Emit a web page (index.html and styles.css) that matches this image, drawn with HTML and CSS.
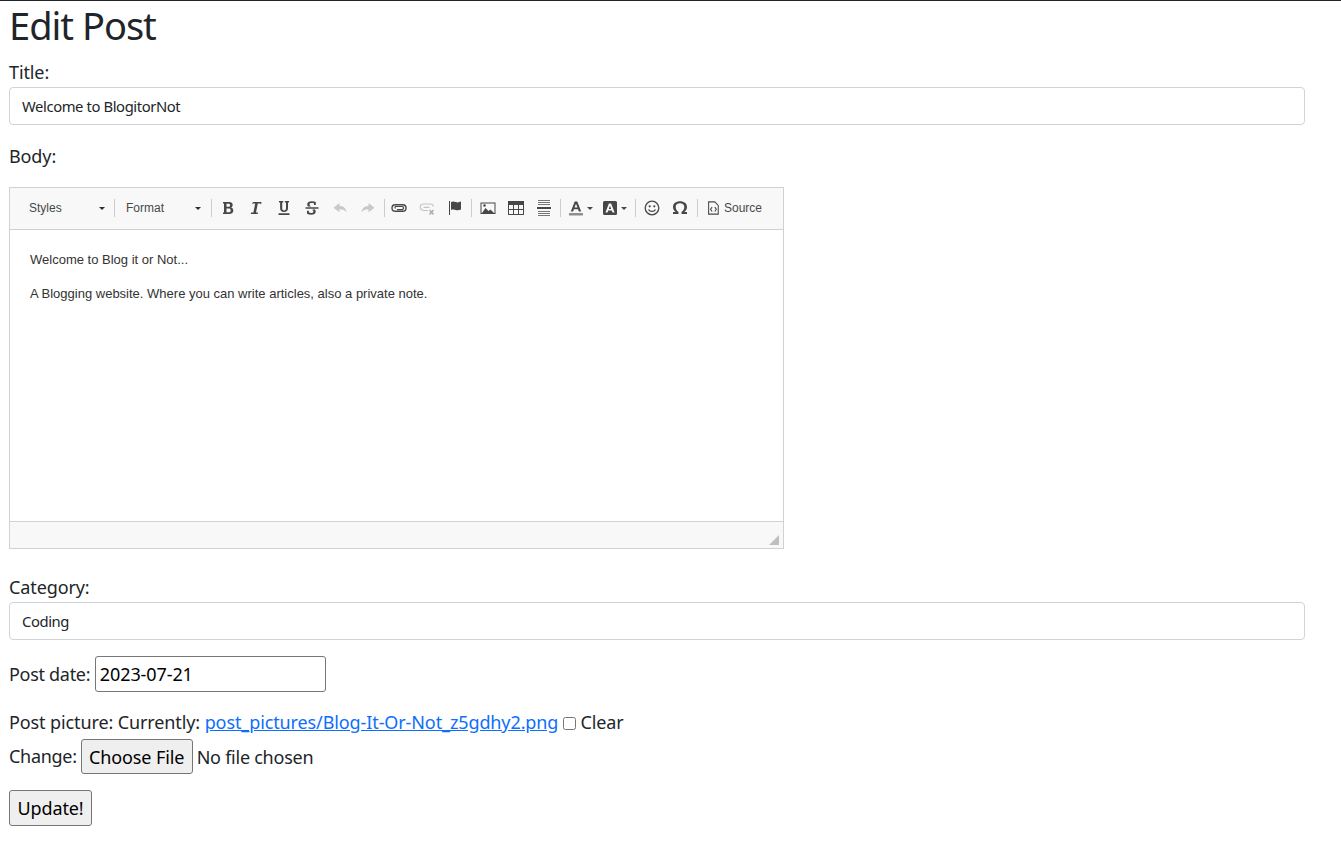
FILE: index.html
```html
<!DOCTYPE html>
<html lang="en">
<head>
<meta charset="utf-8">
<title>Edit Post</title>
<link rel="stylesheet" href="styles.css">
</head>
<body>
<main class="page">
  <h1 class="heading">Edit Post</h1>
  <form class="post-form">
    <p class="field">
      <label class="label">Title:</label>
      <input class="text-input" type="text" value="Welcome to BlogitorNot">
    </p>
    <p class="label body-label">Body:</p>
    <div class="editor">
      <div class="toolbar">
        <div class="combo combo-styles"><span>Styles</span><i class="caret"></i></div>
        <i class="sep"></i>
        <div class="combo combo-format"><span>Format</span><i class="caret"></i></div>
        <i class="sep sep-a"></i>
        <span class="btn"><svg viewBox="0 0 16 16" class="ico"><path fill="#474747" fill-rule="evenodd" d="M3 2h6.200c2.300 0 3.500 1.100 3.500 2.900 0 1.200-.6 2.100-1.700 2.600 1.500.4 2.300 1.500 2.300 3 0 2.200-1.500 3.500-4 3.500H3v-1.600h1V3.600H3zm3.500 1.800v3h1.900c1.100 0 1.700-.5 1.700-1.500s-.6-1.500-1.700-1.500zm0 4.800v3.600h2.200c1.300 0 2-.6 2-1.800s-.7-1.800-2-1.800z"/></svg></span>
        <span class="btn"><svg viewBox="0 0 16 16" class="ico"><path fill="#474747" d="M5 2h8.500l-.4 2.200-1.100-.7H9.800L8 12.500h2l-.3 1.500H2.800l.3-1.500h2.300L7.200 3.500H5.300l-1.300.7z"/></svg></span>
        <span class="btn"><svg viewBox="0 0 16 16" class="ico"><path fill="#474747" d="M3 1h4.300v1.400H6.200v5.900c0 1.400.6 2.100 1.900 2.100s1.900-.7 1.900-2.100V2.400H8.900V1H13v1.400h-1v5.900c0 2.400-1.400 3.600-4 3.600S4.100 10.700 4.100 8.300V2.400H3zM2.500 13.200h11V15h-11z"/></svg></span>
        <span class="btn"><svg viewBox="0 0 16 16" class="ico"><path fill="#474747" d="M1.500 7.200h13v1.600h-13zM4 6.400c-.6-.6-.8-1.300-.8-2 0-1.900 1.900-3.100 4.600-3.100 1.400 0 2.800.3 4 .8v2.800H10V3.500c-.6-.3-1.300-.4-2.100-.4-1.500 0-2.400.5-2.400 1.300 0 .8.500 1.400 1.700 2zM10.700 9.300c.7.600 1 1.300 1 2.100 0 2.200-1.900 3.300-4.400 3.300-1.500 0-3-.3-4.300-1v-2.900h1.900v1.800c.8.300 1.600.4 2.500.4 1.300 0 2-.6 2-1.500 0-.8-.5-1.300-1.200-1.800z"/></svg></span>
        <span class="btn"><svg viewBox="0 0 16 16" class="ico"><path fill="#c9c9c9" d="M7.500 3v3c3.800 0 6.500 2 7 6.500C13 10 11 9.300 7.500 9.300v3L1.500 7.700z"/></svg></span>
        <span class="btn"><svg viewBox="0 0 16 16" class="ico"><path fill="#c9c9c9" d="M8.500 3v3c-3.800 0-6.500 2-7 6.500C3 10 5 9.300 8.500 9.300v3l6-4.600z"/></svg></span>
        <i class="sep sep-b"></i>
        <span class="btn"><svg viewBox="0 0 16 16" class="ico"><path fill="none" stroke="#474747" stroke-width="1.400" d="M7 4.700H4.300a3.300 3.300 0 0 0 0 6.600h7.400a3.300 3.300 0 0 0 0-6.600H6.500"/><path fill="none" stroke="#474747" stroke-width="1.200" d="M4.500 8.400a1.200 1.200 0 0 1 0-1.900h7a1.700 1.700 0 0 1 0 3.100H6"/></svg></span>
        <span class="btn"><svg viewBox="0 0 16 16" class="ico"><path fill="none" stroke="#c4c4c4" stroke-width="1.200" d="M9 10.500H4.500a3 3 0 0 1 0-6.500h7a3 3 0 0 1 3 2.500M4.500 7.300h6"/><path stroke="#a8a8a8" stroke-width="1.400" fill="none" d="M10.500 10l4 4.500m0-4.500l-4 4.500"/></svg></span>
        <span class="btn"><svg viewBox="0 0 16 16" class="ico"><path fill="#474747" d="M2 1h1v14H2zM4 2c1.500-.7 3.200-.7 4.800 0s3.200.4 5.200-.4v8c-2 .8-3.600 1-5.200.4S5.500 9.300 4 10z"/></svg></span>
        <i class="sep sep-c"></i>
        <span class="btn"><svg viewBox="0 0 16 16" class="ico"><path fill="#474747" fill-rule="evenodd" d="M.5 2.500h15v11.500H.5zm1 1v9.500h13V3.500z"/><path fill="#474747" d="M2 13l3.500-5 3 3 2-1.500 3.500 3.500zM4.500 6.800a1.300 1.300 0 1 0 0-2.600 1.300 1.300 0 0 0 0 2.600z"/></svg></span>
        <span class="btn"><svg viewBox="0 0 16 16" class="ico"><path fill="#474747" fill-rule="evenodd" d="M0 1h16v14H0zM1 5v4h4V5zm5 0v4h4V5zm5 0v4h4V5zM1 10v4h4v-4zm5 0v4h4v-4zm5 0v4h4v-4z"/></svg></span>
        <span class="btn"><svg viewBox="0 0 16 16" class="ico"><path fill="#777" d="M2 0h12v1H2zM2 2h12v1H2zM2 4h12v1H2zM2 11h12v1H2zM2 13h12v1H2zM2 15h12v1H2z"/><path fill="#474747" d="M1 7h14v2H1z"/></svg></span>
        <i class="sep sep-d"></i>
        <span class="btn btn-wide"><svg viewBox="0 0 16 16" class="ico"><path fill="#474747" fill-rule="evenodd" d="M6.700 1.500h2.600l3.900 10h-2.300l-.8-2.300H5.900l-.8 2.300H2.800zm1.300 2.300L6.500 7.600h3z"/><path fill="#8f8f8f" d="M1 13h14v2.500H1z"/></svg><i class="caret caret-small"></i></span>
        <span class="btn btn-wide"><svg viewBox="0 0 16 16" class="ico"><path fill="#474747" fill-rule="evenodd" d="M2.500 1h11A1.500 1.500 0 0 1 15 2.500v11a1.500 1.500 0 0 1-1.500 1.500h-11A1.500 1.500 0 0 1 1 13.500v-11A1.500 1.500 0 0 1 2.500 1zM6.900 3.500 3.400 12.500h2.100l.7-2h3.600l.7 2h2.100L9.100 3.500zM8 5.700l1.200 3.200H6.800z"/></svg><i class="caret caret-small"></i></span>
        <i class="sep sep-e"></i>
        <span class="btn"><svg viewBox="0 0 16 16" class="ico"><circle cx="8" cy="8" r="6.800" fill="none" stroke="#474747" stroke-width="1.300"/><circle cx="5.700" cy="6.300" r="1.100" fill="#474747"/><circle cx="10.300" cy="6.300" r="1.100" fill="#474747"/><path fill="none" stroke="#474747" stroke-width="1.300" d="M4.500 9.500c1.500 2.600 5.500 2.600 7 0"/></svg></span>
        <span class="btn"><svg viewBox="0 0 16 16" class="ico"><path fill="#474747" d="M1 14v-2h2.700C2 10.700 1 9 1 6.900 1 3.500 4 1.300 8 1.300s7 2.200 7 5.600c0 2.100-1 3.800-2.700 5.100H15v2H9.500v-2c1.600-1 2.800-2.800 2.800-5 0-2.300-1.600-3.700-4.300-3.700S3.700 4.600 3.700 6.900c0 2.200 1.200 4 2.800 5v2z"/></svg></span>
        <i class="sep sep-f"></i>
        <span class="source"><svg viewBox="0 0 16 16" class="ico ico-source"><path fill="none" stroke="#474747" stroke-width="1.200" d="M3 1h7l4 4v10H3z"/><path fill="none" stroke="#474747" stroke-width="1.200" d="M7 7 5.200 9.500 7 12M10 7l1.800 2.500L10 12"/></svg><span>Source</span></span>
      </div>
      <div class="content">
        <p>Welcome to Blog it or Not...</p>
        <p>A Blogging website. Where you can write articles, also a private note.</p>
      </div>
      <div class="statusbar"><i class="resizer"></i></div>
    </div>
    <p class="field category">
      <label class="label">Category:</label>
      <input class="text-input" type="text" value="Coding">
    </p>
    <p class="date-row"><span class="date-label">Post date:</span> <input class="date-input" type="text" value="2023-07-21"></p>
    <div class="picture-block">
      <p class="picture-row">Post picture: Currently: <a href="#">post_pictures/Blog-It-Or-Not_z5gdhy2.png</a> <input class="check" type="checkbox"> Clear</p>
      <p class="change-row"><span>Change:</span> <input class="file-input" type="file"></p>
    </div>
    <button class="update" type="button">Update!</button>
  </form>
</main>
</body>
</html>
```
FILE: styles.css
```css
* { box-sizing: border-box; }
html, body { margin: 0; padding: 0; }
body {
  border-top: 1px solid #212529;
  background: #fff;
  color: #212529;
  font-family: "Noto Sans", sans-serif;
  font-size: 18px;
  letter-spacing: -0.11px;
  line-height: 27px;
}
.page { padding: 0 36px 0 9px; }
.heading { margin: 0; height: 50px; font-size: 38px; font-weight: 400; line-height: 48px; letter-spacing: -1px; }
.post-form { margin: 0; }
.field { margin: 0; padding-top: 8px; }
.label { display: block; height: 28px; line-height: 27px; margin: 0; }
.text-input {
  display: block;
  width: 100%;
  height: 38px;
  padding: 0 12px;
  border: 1px solid #ced4da;
  border-radius: 4px;
  color: #212529;
  font: 14.800px/24px "Noto Sans", sans-serif;
  letter-spacing: -0.4px;
}
.body-label { margin-top: 18px; }
.editor {
  width: 775px;
  height: 362px;
  margin-top: 16px;
  border: 1px solid #d1d1d1;
  display: flex;
  flex-direction: column;
  letter-spacing: 0;
}
.toolbar {
  height: 42px;
  padding-bottom: 1px;
  display: flex;
  align-items: center;
  background: #f8f8f8;
  border-bottom: 1px solid #d1d1d1;
  color: #484848;
  font: 12px/16px "Liberation Sans", Arial, sans-serif;
}
.combo { height: 28px; display: flex; align-items: center; }
.combo-styles { width: 104px; padding-left: 19px; }
.combo-format { width: 96px; padding-left: 11px; }
.caret {
  width: 0; height: 0;
  border-left: 3px solid transparent;
  border-right: 3px solid transparent;
  border-top: 3px solid #2f2f2f;
  margin-left: auto;
  margin-right: 9px;
}
.combo-format .caret { margin-right: 10px; }
.sep { width: 1px; height: 18px; background: #cdcdcd; flex: none; }
.sep-a { margin-right: 2px; }
.sep-b { margin-left: 2px; }
.sep-c { margin: 0 2px; }
.sep-d { margin: 0 1px 0 2px; }
.sep-e { margin: 0 2px 0 5px; }
.sep-f { margin-left: 3px; }
.btn { width: 28px; height: 28px; display: flex; align-items: center; justify-content: center; flex: none; }
.ico { width: 16px; height: 16px; display: block; flex: none; }
.btn-wide { width: 34px; justify-content: flex-start; padding-left: 6px; }
.caret-small { margin: 0 0 0 3px; border-top-color: #474747; }
.source { display: flex; align-items: center; margin-left: 8px; color: #484848; }
.ico-source { width: 14px; height: 14px; margin-right: 4px; }
.content {
  flex: 1;
  padding: 20px 20px 0;
  color: #333;
  font: 13px/19px "Liberation Sans", Arial, sans-serif;
}
.content p { margin: 0 0 15px; }
.statusbar {
  height: 27px;
  position: relative;
  background: #f8f8f8;
  border-top: 1px solid #d1d1d1;
}
.resizer {
  position: absolute;
  right: 4px;
  bottom: 3px;
  width: 0; height: 0;
  border-left: 10px solid transparent;
  border-bottom: 10px solid #bfbfbf;
}
.category { padding-top: 25px; }
.date-row { margin: 16px 0 0; height: 36px; line-height: 36px; }
.date-label { letter-spacing: -0.3px; }
.date-input {
  width: 231px;
  height: 36px;
  padding: 0 4px;
  border: 1px solid #767676;
  border-radius: 3px;
  color: #000;
  font: 18px "Noto Sans", sans-serif;
  letter-spacing: -0.1px;
  vertical-align: top;
}
.picture-block { margin-top: 14px; }
.picture-row { margin: 0; height: 33px; line-height: 33px; }
.picture-row a { color: #0d6efd; text-decoration: underline; }
.check { width: 13px; height: 13px; margin: 0; vertical-align: -1px; }
.change-row { margin: 0; height: 35px; display: flex; align-items: center; gap: 4px; letter-spacing: -0.3px; }
.file-input { flex: 1; height: 35px; font: 18px/35px "Noto Sans", sans-serif; letter-spacing: -0.25px; }
.file-input::file-selector-button {
  width: 112px;
  height: 35px;
  margin-right: 4px;
  padding: 0;
  border: 1px solid #767676;
  border-radius: 3px;
  background: #efefef;
  color: #000;
  font: inherit;
  letter-spacing: -0.1px;
}
.update {
  display: block;
  margin-top: 16px;
  width: 83px;
  height: 36px;
  padding: 0;
  border: 1px solid #767676;
  border-radius: 3px;
  background: #efefef;
  color: #000;
  font: 18px "Noto Sans", sans-serif;
  letter-spacing: -0.1px;
}
```
